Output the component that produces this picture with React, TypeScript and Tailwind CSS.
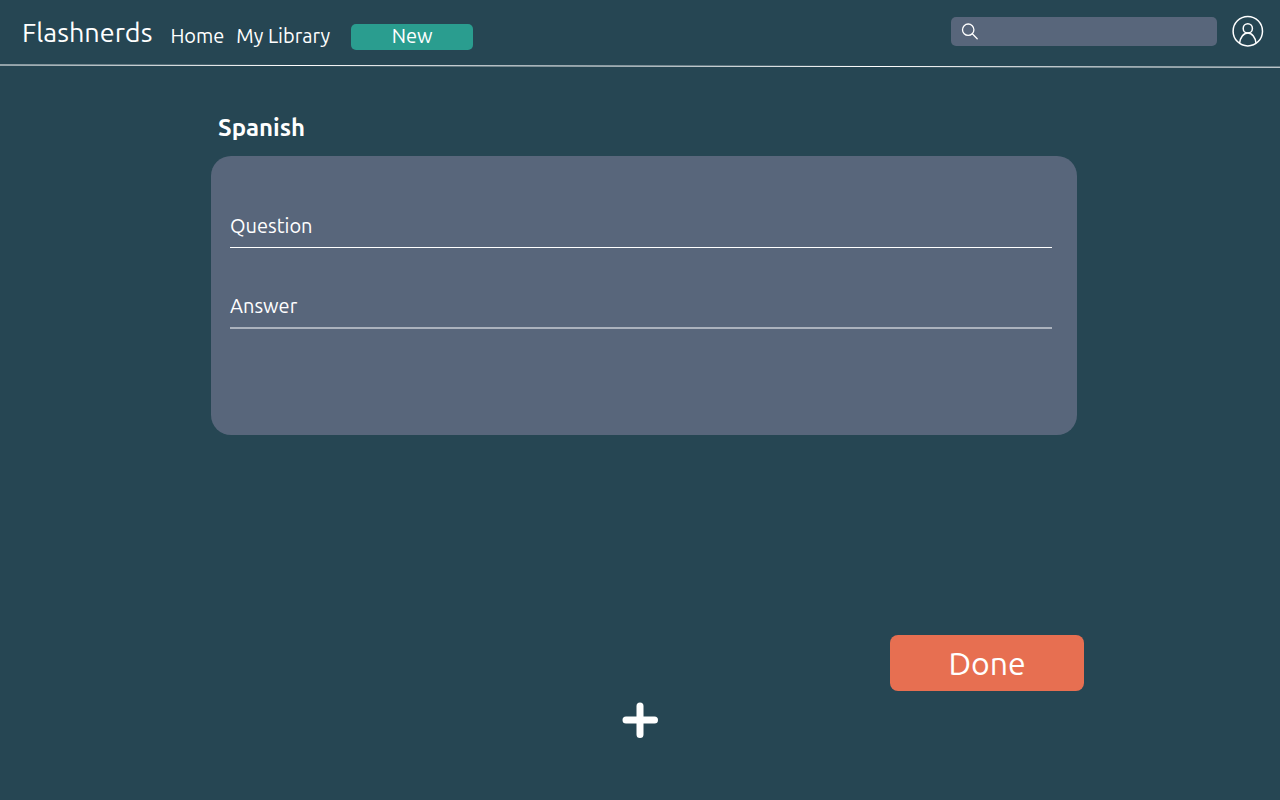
function SearchIcon() {
  return (
    <svg viewBox="0 0 18 18" className="h-[18px] w-[18px] shrink-0" fill="none" stroke="white" strokeWidth="1.3" aria-hidden="true">
      <circle cx="7.2" cy="7.7" r="5.7" />
      <path d="M11.3 11.8 16.2 16.7" strokeLinecap="round" />
    </svg>
  );
}

function ProfileIcon() {
  return (
    <svg viewBox="0 0 32 32" className="h-8 w-8" fill="none" stroke="white" strokeWidth="1.5" aria-hidden="true">
      <circle cx="15.8" cy="16.2" r="14.7" />
      <circle cx="15.8" cy="13.4" r="4.6" />
      <path d="M7.6 28.2C8.2 22.6 11.4 18 15.8 18s7.6 4.6 8.2 10.2" />
    </svg>
  );
}

function PlusIcon() {
  return (
    <svg viewBox="0 0 36 36" className="h-9 w-9" fill="none" stroke="white" strokeWidth="7" strokeLinecap="round" aria-hidden="true">
      <path d="M18 4v28.5M4 18h28.5" />
    </svg>
  );
}

function Header() {
  return (
    <header>
      <div className="flex h-16 items-center pr-4 pb-[2px] pl-[22px]">
        <a href="#home" className="pt-[2px] text-[27px] leading-8">
          Flashnerds
        </a>
        <nav className="ml-[18px] flex items-center gap-3 pt-3 text-[20px] leading-[26px]">
          <a href="#home" className="pb-[2px]">Home</a>
          <a href="#library" className="pb-[2px]">My Library</a>
          <button type="button" className="ml-[9px] flex h-[26px] w-[122px] items-center justify-center rounded-[5px] bg-[#2a9d8f] pb-[2px]">
            New
          </button>
        </nav>
        <form className="ml-auto flex h-[29px] w-[266px] items-center rounded-[5px] bg-[#58667b] px-[10px]">
          <label htmlFor="search" aria-label="Search">
            <SearchIcon />
          </label>
          <input id="search" type="search" className="ml-2 min-w-0 flex-1 bg-transparent text-base outline-none" />
        </form>
        <button type="button" aria-label="Profile" className="ml-[15px]">
          <ProfileIcon />
        </button>
      </div>
      <svg viewBox="0 0 1280 4" preserveAspectRatio="none" className="block h-1 w-full" aria-hidden="true">
        <line x1="0" y1="1" x2="1280" y2="3.2" stroke="white" strokeWidth="1" />
      </svg>
    </header>
  );
}

export default function App() {
  return (
    <div className="min-h-screen bg-[#264653] font-['Ubuntu','Noto_Sans',sans-serif] text-white">
      <Header />
      <main className="mx-auto flex max-w-[888px] flex-col pt-11">
        <h1 className="ml-[22px] text-[24px] leading-8 font-bold">Spanish</h1>
        <section className="mt-3 mr-[7px] ml-[15px] rounded-[20px] bg-[#58667b] pt-[54px] pr-[25px] pb-[106px] pl-[19px] text-[20px]">
          <div className="flex h-[38px] items-start border-b border-white">
            <label htmlFor="question" className="leading-8">
              Question
            </label>
            <input id="question" type="text" className="ml-3 h-8 min-w-0 flex-1 bg-transparent outline-none" />
          </div>
          <div className="mt-[42px] flex h-[39px] items-start border-b-2 border-[#abb2bd]">
            <label htmlFor="answer" className="leading-8">
              Answer
            </label>
            <input id="answer" type="text" className="ml-3 h-8 min-w-0 flex-1 bg-transparent outline-none" />
          </div>
        </section>
        <button type="button" className="mt-[200px] flex h-14 w-[194px] items-center justify-center self-end rounded-lg bg-[#e76f51] text-[32px]">
          Done
        </button>
        <button type="button" aria-label="Add card" className="mt-[11px] self-center">
          <PlusIcon />
        </button>
      </main>
    </div>
  );
}
